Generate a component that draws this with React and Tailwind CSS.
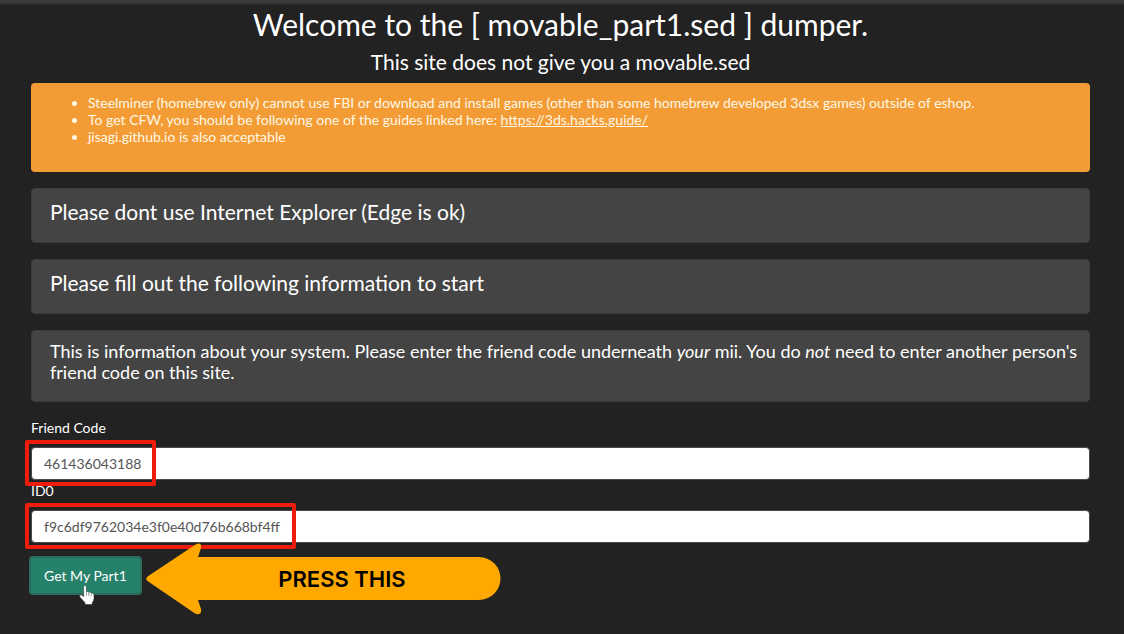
const notices = [
  "Please dont use Internet Explorer (Edge is ok)",
  "Please fill out the following information to start",
];

function Well({ children }) {
  return (
    <div className="mb-4 rounded border border-[#3c3c3c] bg-[#444444] pt-[10px] pr-2 pb-[17px] pl-[18px]">
      {children}
    </div>
  );
}

function Field({ id, label, value, children }) {
  return (
    <div>
      <label htmlFor={id} className="mb-[9px] block h-5 text-[14px] leading-5">
        {label}
      </label>
      <div className="relative mb-px">
        <input
          id={id}
          type="text"
          defaultValue={value}
          className="block h-[33px] w-full rounded border border-[#4a4a4a] bg-white px-3 text-[14px] text-[#555555] outline-none"
        />
        {children}
      </div>
    </div>
  );
}

function PressThisArrow() {
  return (
    <div className="pointer-events-none absolute -top-[13px] left-[115px] h-[72px] w-[356px]">
      <svg viewBox="0 0 356 72" className="absolute inset-0 h-full w-full" fill="#ffa800" aria-hidden="true">
        <path d="M1.5 33.5 L50 1.2 Q56 -1 55 5 L52 14 H333 A21.5 21.5 0 0 1 333 57 H52 L55 66 Q56 73 49 70.5 L1.5 38 Q-1 36 1.5 33.5 Z" />
      </svg>
      <span className="relative flex h-full items-center justify-center pl-9 font-[Inter] text-[22px] leading-6 font-semibold text-black">
        PRESS THIS
      </span>
    </div>
  );
}

function HandCursor() {
  return (
    <svg
      viewBox="0 0 16 20"
      className="pointer-events-none absolute top-[29px] left-[48px] h-5 w-4"
      fill="#ffffff"
      stroke="#222222"
      strokeWidth="0.5"
      aria-hidden="true"
    >
      <path d="M4.6 1.6 Q6 -0.4 7.4 1.6 V7 Q8.8 6 9.8 7.4 Q11.2 6.5 12.2 8 Q14.8 7.5 15 10 V13.5 Q14.8 16 13.2 17.5 V19.5 H6 V17.8 Q3.5 15 0.8 12 Q0.2 9.6 2.2 9.8 L4.6 11.5 Z" />
      <path d="M7.4 7.5 V10.5 M9.8 8 V10.8 M12.2 8.5 V11" fill="none" />
    </svg>
  );
}

export default function App() {
  return (
    <div className="min-h-screen bg-[#222222] font-[Lato,sans-serif] text-white">
      <div className="h-[5px] border-b-2 border-[#2c2c2c] bg-[#3b3b3b]" />
      <main className="pr-[34px] pb-8 pl-[31px]">
        <h1 className="text-center text-[30px] leading-[38px]">
          Welcome to the [ movable_part1.sed ] dumper.
        </h1>
        <h2 className="mb-[6px] pt-1 text-center text-[21px] leading-[30px]">
          This site does not give you a movable.sed
        </h2>

        <div className="mb-4 rounded bg-[#f39c35] pt-[11px] pb-[27px] pl-[57px] text-[14px] leading-[17px] text-[#fff8e6]">
          <ul className="list-disc">
            <li>
              Steelminer (homebrew only) cannot use FBI or download and install games (other than some
              homebrew developed 3dsx games) outside of eshop.
            </li>
            <li>
              To get CFW, you should be following one of the guides linked here:{" "}
              <a href="https://3ds.hacks.guide/" className="underline">
                https://3ds.hacks.guide/
              </a>
            </li>
            <li>jisagi.github.io is also acceptable</li>
          </ul>
        </div>

        {notices.map((notice) => (
          <Well key={notice}>
            <h3 className="text-[21px] leading-[26px]">{notice}</h3>
          </Well>
        ))}
        <Well>
          <p className="pb-px text-[18px] leading-[21px]">
            This is information about your system. Please enter the friend code underneath <em>your</em>{" "}
            mii. You do <em>not</em> need to enter another person's friend code on this site.
          </p>
        </Well>

        <form onSubmit={(e) => e.preventDefault()}>
          <Field id="friend-code" label="Friend Code" value="461436043188">
            <div className="pointer-events-none absolute -top-[7px] -left-[6px] h-[46px] w-[131px] rounded-xs border-4 border-[#ee1c0c]" />
          </Field>
          <Field id="id0" label="ID0" value="f9c6df9762034e3f0e40d76b668bf4ff">
            <div className="pointer-events-none absolute -top-[7px] -left-[6px] h-[46px] w-[271px] rounded-xs border-4 border-[#ee1c0c]" />
          </Field>
          <div className="relative mt-[13px]">
            <button
              type="submit"
              className="-ml-0.5 h-[39px] cursor-pointer rounded border-2 border-[#2c6b5c] bg-[#26816a] px-[13px] text-[14px]"
            >
              Get My Part1
            </button>
            <HandCursor />
            <PressThisArrow />
          </div>
        </form>
      </main>
    </div>
  );
}
